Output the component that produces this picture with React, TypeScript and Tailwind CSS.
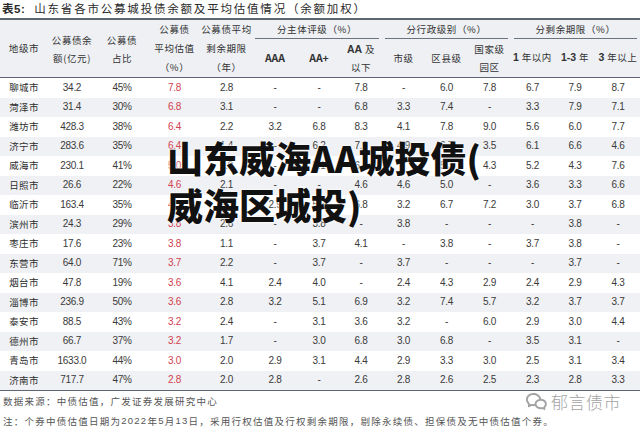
import React from "react";
import { RiWechatLine } from "react-icons/ri";

const COLS =
  "grid grid-cols-[48px_48px_52px_53px_51px_46px_42px_42px_43px_43px_43px_43px_42px_44px]";

type Row = [string, string, string, string, string, string, string, string, string, string, string, string, string, string];

const rows: Row[] = [
  ["聊城市", "34.2", "45%", "7.8", "2.8", "-", "-", "7.8", "-", "6.0", "7.8", "6.7", "7.9", "8.7"],
  ["菏泽市", "31.4", "30%", "6.8", "3.1", "-", "-", "6.8", "3.3", "7.4", "-", "3.3", "7.9", "7.1"],
  ["潍坊市", "428.3", "38%", "6.4", "2.2", "3.2", "6.8", "8.3", "4.1", "7.8", "9.0", "5.6", "6.0", "7.7"],
  ["济宁市", "283.6", "35%", "6.4", "1.4", "-", "6.2", "7.6", "4.9", "6.7", "3.5", "6.1", "6.6", "4.6"],
  ["威海市", "230.1", "41%", "5.0", "1.9", "-", "5.1", "6.4", "-", "5.3", "4.3", "5.2", "4.3", "7.6"],
  ["日照市", "26.6", "22%", "4.6", "2.1", "-", "-", "4.6", "4.6", "5.0", "-", "3.6", "3.3", "6.6"],
  ["临沂市", "163.4", "35%", "4.5", "2.3", "2.9", "5.6", "6.8", "3.2", "6.7", "7.2", "3.0", "3.7", "6.8"],
  ["滨州市", "24.3", "29%", "3.8", "2.6", "-", "3.8", "-", "3.8", "-", "-", "-", "3.8", "-"],
  ["枣庄市", "17.6", "23%", "3.8", "1.1", "-", "3.7", "4.1", "-", "3.8", "-", "3.7", "3.8", "-"],
  ["东营市", "64.0", "71%", "3.7", "2.2", "-", "3.7", "-", "3.7", "-", "-", "-", "3.7", "-"],
  ["烟台市", "47.8", "19%", "3.6", "4.1", "2.4", "4.0", "-", "2.4", "4.3", "2.9", "2.4", "2.9", "4.3"],
  ["淄博市", "236.9", "50%", "3.6", "2.8", "3.2", "5.1", "6.9", "3.2", "7.4", "5.7", "3.2", "3.7", "3.7"],
  ["泰安市", "88.5", "43%", "3.2", "2.4", "-", "3.1", "3.6", "3.2", "-", "6.0", "2.9", "3.0", "4.4"],
  ["德州市", "66.7", "37%", "3.2", "1.7", "-", "3.0", "6.8", "3.0", "6.8", "-", "3.5", "3.1", "-"],
  ["青岛市", "1633.0", "44%", "3.0", "2.0", "2.9", "3.1", "4.4", "2.9", "3.3", "3.0", "2.5", "3.1", "3.4"],
  ["济南市", "717.7", "47%", "2.8", "2.0", "2.8", "-", "2.6", "2.8", "2.6", "2.5", "2.3", "2.8", "3.3"],
];

const cjk = "font-['Noto_Sans_CJK_SC',sans-serif]";
const num = "font-['Liberation_Sans',Arial,sans-serif]";

function H({ children, className = "" }: { children: React.ReactNode; className?: string }) {
  return (
    <div
      className={`flex flex-col items-center justify-center text-center text-[9.5px] tracking-[0.6px] text-[#333] ${cjk} ${className}`}
    >
      {children}
    </div>
  );
}

export default function App() {
  return (
    <div className="relative w-[640px] h-[429px] overflow-hidden bg-white text-[#333]">
      {/* title */}
      <div className={`h-[18px] flex items-center pl-[2px] ${cjk} text-[11.5px] leading-none text-[#2a2a2a]`}>
        <span className="font-bold tracking-[0.5px]">表<span className={`${num} font-bold`}>5:</span></span>
        <span className="ml-[9px] tracking-[1.8px]">山东省各市公募城投债余额及平均估值情况（余额加权）</span>
      </div>

      {/* header */}
      <div className={`${COLS} grid-rows-[19px_38px] bg-[#eef0f4] border-t-2 border-b-[1.5px] border-[#5d6472]`}>
        <H className="row-span-2">地级市</H>
        <H className="row-span-2 leading-[18px]">
          <span>公募债余</span>
          <span>额(亿元)</span>
        </H>
        <H className="row-span-2 leading-[18px]">
          <span>公募债</span>
          <span>占比</span>
        </H>
        <H className="row-span-2 leading-[19px]">
          <span>公募债</span>
          <span>平均估值</span>
          <span>（%）</span>
        </H>
        <H className="row-span-2 leading-[19px]">
          <span>公募债平均</span>
          <span>剩余期限</span>
          <span>（年）</span>
        </H>
        <div className="col-span-3 px-[3px]">
          <H className="h-full border-b border-[#6b7280]">分主体评级（%）</H>
        </div>
        <div className="col-span-3 px-[3px]">
          <H className="h-full border-b border-[#6b7280]">分行政级别（%）</H>
        </div>
        <div className="col-span-3 px-[3px]">
          <H className="h-full border-b border-[#6b7280]">分剩余期限（%）</H>
        </div>
        <H className={`${num} font-bold text-[10.5px] tracking-normal`}>AAA</H>
        <H className={`${num} font-bold text-[10.5px] tracking-normal`}>AA+</H>
        <H className="leading-[18px]">
          <span>
            <span className={`${num} font-bold text-[10.5px] tracking-normal`}>AA</span> 及
          </span>
          <span>以下</span>
        </H>
        <H>市级</H>
        <H>区县级</H>
        <H className="leading-[18px]">
          <span>国家级</span>
          <span>园区</span>
        </H>
        <H>
          <span>
            <span className={`${num} font-bold text-[10.5px] tracking-normal`}>1</span> 年以内
          </span>
        </H>
        <H>
          <span>
            <span className={`${num} font-bold text-[10.5px] tracking-normal`}>1-3</span> 年
          </span>
        </H>
        <H>
          <span>
            <span className={`${num} font-bold text-[10.5px] tracking-normal`}>3</span> 年以上
          </span>
        </H>
      </div>

      {/* body */}
      <div className="border-b-[1.5px] border-[#5d6472]">
        {rows.map((r, i) => (
          <div key={r[0]} className={`${COLS} h-[19.5px] items-center ${i % 2 === 1 ? "bg-[#f0f1f4]" : "bg-white"}`}>
            {r.map((c, j) => (
              <div
                key={j}
                className={`text-center leading-none ${
                  j === 0
                    ? `${cjk} text-[9.5px] tracking-[0.4px] text-[#2e2e2e]`
                    : `${num} text-[10px] tracking-[-0.3px] ${j === 3 ? "text-[#d0404f]" : "text-[#3a3a3a]"}`
                }`}
              >
                {c}
              </div>
            ))}
          </div>
        ))}
      </div>

      {/* footer */}
      <div className={`${cjk} text-[9.5px] tracking-[1.25px] text-[#555] pl-[3px]`}>
        <div className="h-[20px] flex items-center">数据来源：中债估值，广发证券发展研究中心</div>
        <div className="h-[20px] flex items-center">
          注：个券中债估值日期为<span className={num}>2022</span>年<span className={num}>5</span>月<span className={num}>13</span>日，采用行权估值及行权剩余期限，剔除永续债、担保债及无中债估值个券。
        </div>
      </div>

      {/* watermark */}
      <div className="absolute left-[525px] top-[390px] flex items-center gap-[3px] text-[#a3a3a3]">
        <RiWechatLine className="w-[23px] h-[23px]" />
        <span className={`${cjk} font-light text-[17px] tracking-[0.5px] leading-none`}>郁言债市</span>
      </div>

      {/* overlay headline */}
      <div
        className={`absolute left-[167px] top-[134px] ${cjk} font-black text-[36px] leading-[47px] text-[#111] [text-shadow:0_0_3px_#fff,0_0_2px_#fff]`}
      >
        <div>山东威海AA城投债(</div>
        <div>威海区城投)</div>
      </div>
    </div>
  );
}
